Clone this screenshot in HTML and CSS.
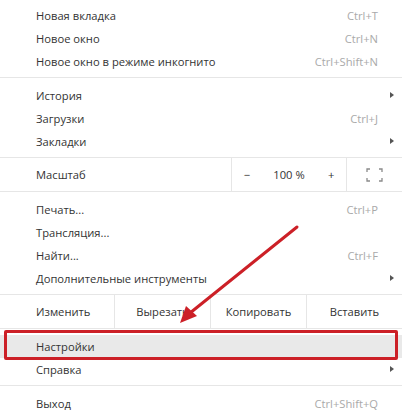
FILE: index.html
```html
<!DOCTYPE html>
<html lang="ru">
<head>
  <meta charset="UTF-8">
  <title>Меню</title>
  <link rel="stylesheet" href="styles.css">
</head>
<body>
  <div class="menu">
    <div class="section first">
      <div class="item"><span>Новая вкладка</span><span class="key">Ctrl+T</span></div>
      <div class="item"><span>Новое окно</span><span class="key">Ctrl+N</span></div>
      <div class="item"><span>Новое окно в режиме инкогнито</span><span class="key">Ctrl+Shift+N</span></div>
    </div>
    <div class="section">
      <div class="item"><span>История</span><span class="sub"></span></div>
      <div class="item"><span>Загрузки</span><span class="key">Ctrl+J</span></div>
      <div class="item"><span>Закладки</span><span class="sub"></span></div>
    </div>
    <div class="zoom">
      <span class="zoom-label">Масштаб</span>
      <div class="zoom-ctrl">
        <span>−</span><span class="pct">100 %</span><span>+</span>
      </div>
      <div class="zoom-full">
        <svg width="17" height="14" viewBox="0 0 17 14" fill="none" stroke="#8a8a8a" stroke-width="1.3">
          <path d="M1 4V1H4M13 1H16V4M16 10V13H13M4 13H1V10"/>
        </svg>
      </div>
    </div>
    <div class="section">
      <div class="item"><span>Печать...</span><span class="key">Ctrl+P</span></div>
      <div class="item"><span>Трансляция...</span></div>
      <div class="item"><span>Найти...</span><span class="key">Ctrl+F</span></div>
      <div class="item"><span>Дополнительные инструменты</span><span class="sub"></span></div>
    </div>
    <div class="edit">
      <span class="edit-label">Изменить</span>
      <span class="edit-btn">Вырезать</span>
      <span class="edit-btn">Копировать</span>
      <span class="edit-btn">Вставить</span>
    </div>
    <div class="section">
      <div class="item active"><span>Настройки</span></div>
      <div class="item"><span>Справка</span><span class="sub"></span></div>
    </div>
    <div class="section last">
      <div class="item"><span>Выход</span><span class="key">Ctrl+Shift+Q</span></div>
    </div>
  </div>

  <div class="highlight"></div>
  <svg class="pointer" width="402" height="416" viewBox="0 0 402 416">
    <line x1="297" y1="227" x2="190" y2="313" stroke="#cc2027" stroke-width="3" stroke-linecap="round"/>
    <polygon points="180,323 186,306 197,316" fill="#cc2027"/>
  </svg>
</body>
</html>
```

FILE: styles.css
```css
body {
  margin: 0;
  background: #fff;
  font-family: "Open Sans", "Noto Sans", sans-serif;
  font-size: 11.2px;
  color: #333;
}
.menu {
  width: 402px;
  height: 416px;
  overflow: hidden;
}
.section {
  padding: 6px 0 4px;
  border-bottom: 1px solid #e6e6e6;
}
.section.first {
  padding-top: 4px;
}
.section.last {
  border-bottom: none;
}
.item {
  height: 23px;
  display: flex;
  align-items: center;
  justify-content: space-between;
  padding: 0 24px 0 36px;
  position: relative;
}
.item.active {
  background: #e9e9e9;
}
.key {
  color: #a9a9a9;
}
.sub {
  position: absolute;
  right: 8px;
  top: 8px;
  width: 0;
  height: 0;
  border-top: 3.5px solid transparent;
  border-bottom: 3.5px solid transparent;
  border-left: 4px solid #555;
}
.zoom {
  height: 33px;
  display: flex;
  align-items: center;
  border-bottom: 1px solid #e6e6e6;
}
.zoom-label {
  width: 195px;
  padding-left: 36px;
}
.zoom-ctrl {
  width: 114px;
  height: 100%;
  border-left: 1px solid #e6e6e6;
  border-right: 1px solid #e6e6e6;
  display: flex;
  align-items: center;
  justify-content: space-around;
}
.zoom-full {
  flex: 1;
  display: flex;
  justify-content: center;
  align-items: center;
}
.edit {
  height: 33px;
  display: flex;
  align-items: center;
  border-bottom: 1px solid #e6e6e6;
}
.edit-label {
  width: 78px;
  padding-left: 36px;
}
.edit-btn {
  flex: 1;
  height: 100%;
  display: flex;
  align-items: center;
  justify-content: center;
  border-left: 1px solid #e6e6e6;
}
.highlight {
  position: absolute;
  left: 4px;
  top: 330px;
  width: 388px;
  height: 24px;
  border: 3px solid #cc2027;
  border-radius: 2px;
}
.pointer {
  position: absolute;
  left: 0;
  top: 0;
}
```
